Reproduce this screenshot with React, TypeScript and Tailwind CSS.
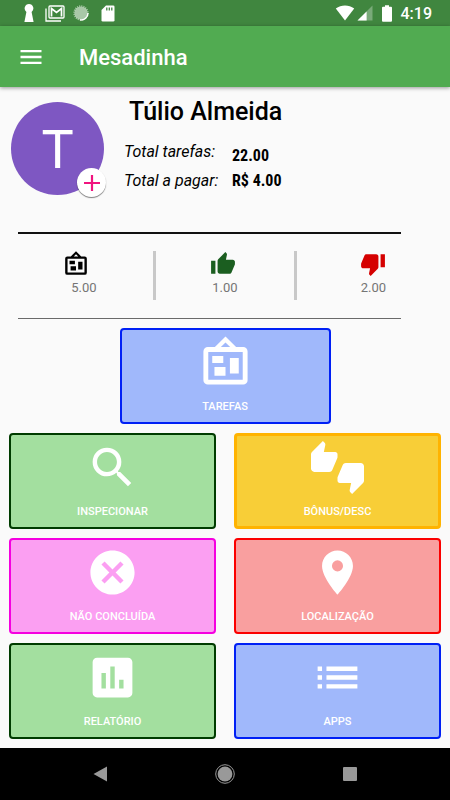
import type { ReactNode } from "react";
import { MdAssessment, MdCancel, MdList, MdMenu, MdPlace, MdSearch, MdThumbDown, MdThumbUp } from "react-icons/md";

function BoardIcon({ className }: { className?: string }) {
  return (
    <svg viewBox="0 0 24 24" fill="currentColor" className={className} aria-hidden="true">
      <path
        fillRule="evenodd"
        d="M12 .2 16.800 5H20a2 2 0 0 1 2 2V20a2 2 0 0 1-2 2H4a2 2 0 0 1-2-2V7a2 2 0 0 1 2-2H7.200ZM12 2.900 9.900 5H14.100ZM4.200 7.200V19.800H19.800V7.200Z"
      />
      <path d="M6 9h5v3.200H6zM7 14h5v4H7zM14 10h4v7h-4z" />
    </svg>
  );
}

function ThumbsIcon({ className }: { className?: string }) {
  return (
    <svg viewBox="0 0 24 24" fill="currentColor" className={className} aria-hidden="true">
      <path d="M12 6c0-.55-.45-1-1-1H5.82l.66-3.18.02-.23c0-.31-.13-.59-.33-.8L5.38 0 .44 4.94C.17 5.21 0 5.59 0 6v6.5c0 .83.67 1.5 1.5 1.5h6.75c.62 0 1.15-.38 1.38-.91l2.26-5.29c.07-.17.11-.36.11-.55V6zm10.5 4h-6.75c-.62 0-1.15.38-1.38.91l-2.26 5.29c-.07.17-.11.36-.11.55V18c0 .55.45 1 1 1h5.18l-.66 3.18-.02.24c0 .31.13.59.33.8l.79.78 4.94-4.94c.27-.27.44-.65.44-1.06v-6.5c0-.83-.67-1.5-1.5-1.5z" />
    </svg>
  );
}

function StatusBar() {
  return (
    <div className="flex h-[26px] items-center bg-[#40863f] pl-6 pr-[18px] text-white">
      <svg viewBox="0 0 10 18" fill="currentColor" className="mr-[11px] h-[18px] w-[10px]">
        <path d="M5 0a4.4 4.4 0 0 1 2.6 7.9L8.4 12 9.6 18H.4L1.6 12 2.4 7.9A4.4 4.4 0 0 1 5 0Z" />
      </svg>
      <svg viewBox="0 0 20 17" fill="none" stroke="currentColor" className="mr-2 h-[17px] w-[20px]">
        <path d="M1 3.5V16H16" strokeWidth="1.3" />
        <rect x="4" y="1" width="15" height="12" rx="1" strokeWidth="1.3" />
        <path d="M6.500 11.500V3.500L11.500 7.500 16.500 3.500V11.500" strokeWidth="1.700" />
      </svg>
      <svg viewBox="0 0 16 16" fill="none" className="mr-3 size-4">
        <circle cx="8" cy="8" r="6.600" fill="#fff" opacity=".55" />
        <circle cx="8" cy="8" r="7" stroke="#fff" strokeWidth="1.400" strokeDasharray="1.200 1" opacity=".5" />
        <path d="M15 8a7 7 0 0 1-8 6.900" stroke="#fff" strokeWidth="1.400" />
      </svg>
      <svg viewBox="0 0 14 17" className="h-[17px] w-[14px]">
        <path d="M5 .5h7.2a1.3 1.3 0 0 1 1.3 1.3v13.4a1.3 1.3 0 0 1-1.3 1.3H1.8A1.3 1.3 0 0 1 .5 15.2V5Z" fill="currentColor" />
        <path d="M5.800 2.500v3M8.300 2.500v3M10.800 2.500v3" stroke="#40863f" strokeWidth="1.300" />
      </svg>
      <svg viewBox="0 0 20 16" fill="currentColor" className="ml-auto mr-[2px] h-4 w-5">
        <path d="M.800 3.600C6.200-.400 13.800-.400 19.200 3.600L10 15.500Z" />
      </svg>
      <svg viewBox="0 0 16 16" fill="currentColor" className="mr-2 size-4">
        <path d="M15.500.500V15.500H.500Z" opacity=".3" />
        <path d="M9.600 6.400V15.500H.500Z" />
      </svg>
      <svg viewBox="0 0 12 17" fill="currentColor" className="mr-2 h-[17px] w-3">
        <path d="M4 .300h4v1.500h2a1 1 0 0 1 1 1V15.700a1 1 0 0 1-1 1H2a1 1 0 0 1-1-1V2.800a1 1 0 0 1 1-1H4Z" />
      </svg>
      <span className="pt-[2px] text-base font-medium">4:19</span>
    </div>
  );
}

function Profile() {
  return (
    <section className="flex gap-5 pl-[11px] pt-[9px]">
      <div className="relative mt-[6px] flex size-[93px] shrink-0 items-center justify-center rounded-full bg-[#7e57c2]">
        <span className="pt-[2px] text-[54px] text-white">T</span>
        <button
          aria-label="Adicionar"
          className="absolute -bottom-[2px] -right-[2px] flex size-[29px] items-center justify-center rounded-full bg-white shadow-[0_1px_1px_#00000080]"
        >
          <svg viewBox="0 0 16 16" stroke="#f0147f" strokeWidth="2.200" className="size-4">
            <path d="M8 0v16M0 8h16" />
          </svg>
        </button>
      </div>
      <div className="text-black">
        <h2 className="pl-[5px] pt-px text-[25px] leading-[30px] font-medium">Túlio Almeida</h2>
        <dl className="mt-[11px] grid grid-cols-[98px_auto] gap-x-[10px] gap-y-px text-base leading-7">
          <dt className="italic">Total tarefas:</dt>
          <dd className="pt-2 font-['Roboto_Condensed','Liberation_Sans_Narrow',Roboto,sans-serif] leading-5 font-bold">22.00</dd>
          <dt className="italic">Total a pagar:</dt>
          <dd className="font-['Roboto_Condensed','Liberation_Sans_Narrow',Roboto,sans-serif] font-bold">R$ 4.00</dd>
        </dl>
      </div>
    </section>
  );
}

function Stat({ icon, value }: { icon: ReactNode; value: string }) {
  return (
    <div className="flex flex-col items-center">
      {icon}
      <span className="mt-[3px] text-[13px] leading-4 text-[#757575]">{value}</span>
    </div>
  );
}

function Stats() {
  return (
    <section className="mt-[37px]">
      <hr className="ml-[18px] mr-[49px] border-t-2 border-[#111]" />
      <div className="grid h-[84px] grid-cols-[9fr_3px_9fr_3px_10fr] pl-[15px] pt-[17px]">
        <Stat icon={<BoardIcon className="mr-4 size-[26px] text-black" />} value="5.00" />
        <div className="h-[49px] bg-[#c8c8c8]" />
        <Stat icon={<MdThumbUp className="mr-1 size-[26px] text-[#1b5e20]" />} value="1.00" />
        <div className="h-[49px] bg-[#c8c8c8]" />
        <Stat icon={<MdThumbDown className="size-[26px] text-[#d50000]" />} value="2.00" />
      </div>
      <hr className="ml-[18px] mr-[49px] border-t border-[#6a6a6a]" />
    </section>
  );
}

function Tile({ label, className, children }: { label: string; className: string; children: ReactNode }) {
  return (
    <button className={`flex h-24 flex-col items-center rounded-[4px] text-white ${className}`}>
      {children}
      <span className="mt-[10px] text-[11px] leading-4 font-medium">{label}</span>
    </button>
  );
}

const GREEN = "border-2 border-[#003c00] bg-[#a3df9f] pt-[6px]";
const BLUE = "border-2 border-[#0020f5] bg-[#a0b8fb] pt-[6px]";

function Menu() {
  return (
    <main className="mt-[9px] grid grid-cols-2 gap-x-[18px] gap-y-[9px] px-[9px] pb-[9px]">
      <div className="col-span-2 grid justify-center">
        <Tile label="TAREFAS" className={`w-[211px] ${BLUE}`}>
          <BoardIcon className="size-[53px]" />
        </Tile>
      </div>
      <Tile label="INSPECIONAR" className={GREEN}>
        <MdSearch className="size-[53px]" />
      </Tile>
      <Tile label="BÔNUS/DESC" className="border-[3px] border-[#ffb300] bg-[#f8ce37] pt-[5px]">
        <ThumbsIcon className="size-[53px]" />
      </Tile>
      <Tile label="NÃO CONCLUÍDA" className="border-2 border-[#f500e0] bg-[#fb9ff2] pt-[6px]">
        <MdCancel className="size-[53px]" />
      </Tile>
      <Tile label="LOCALIZAÇÃO" className="border-2 border-[#fb0000] bg-[#f99f9f] pt-[6px]">
        <MdPlace className="size-[53px]" />
      </Tile>
      <Tile label="RELATÓRIO" className={GREEN}>
        <MdAssessment className="size-[53px]" />
      </Tile>
      <Tile label="APPS" className={BLUE}>
        <MdList className="size-[53px]" />
      </Tile>
    </main>
  );
}

function NavBar() {
  return (
    <nav className="grid h-[52px] grid-cols-[1fr_auto_1fr] items-center bg-black px-[93px] text-[#999]">
      <button aria-label="Voltar" className="justify-self-start">
        <svg viewBox="0 0 14 16" fill="currentColor" className="h-4 w-[14px]">
          <path d="M14 .500V15.500L.500 8Z" />
        </svg>
      </button>
      <button aria-label="Início">
        <svg viewBox="0 0 20 20" className="size-5">
          <circle cx="10" cy="10" r="7.400" fill="currentColor" />
          <circle cx="10" cy="10" r="9.300" fill="none" stroke="currentColor" />
        </svg>
      </button>
      <button aria-label="Recentes" className="size-[14px] justify-self-end rounded-[1px] bg-[#999]" />
    </nav>
  );
}

export default function App() {
  return (
    <div className="flex min-h-screen flex-col bg-[#fafafa] font-[Roboto,sans-serif]">
      <StatusBar />
      <header className="flex h-[61px] items-center gap-[34px] bg-[#51ab51] px-[17px] text-white shadow-[0_1px_4px_#00000066]">
        <button aria-label="Menu">
          <MdMenu className="size-7" />
        </button>
        <h1 className="pt-[2px] text-[22px] font-medium">Mesadinha</h1>
      </header>
      <Profile />
      <Stats />
      <Menu />
      <div className="mt-auto">
        <NavBar />
      </div>
    </div>
  );
}
